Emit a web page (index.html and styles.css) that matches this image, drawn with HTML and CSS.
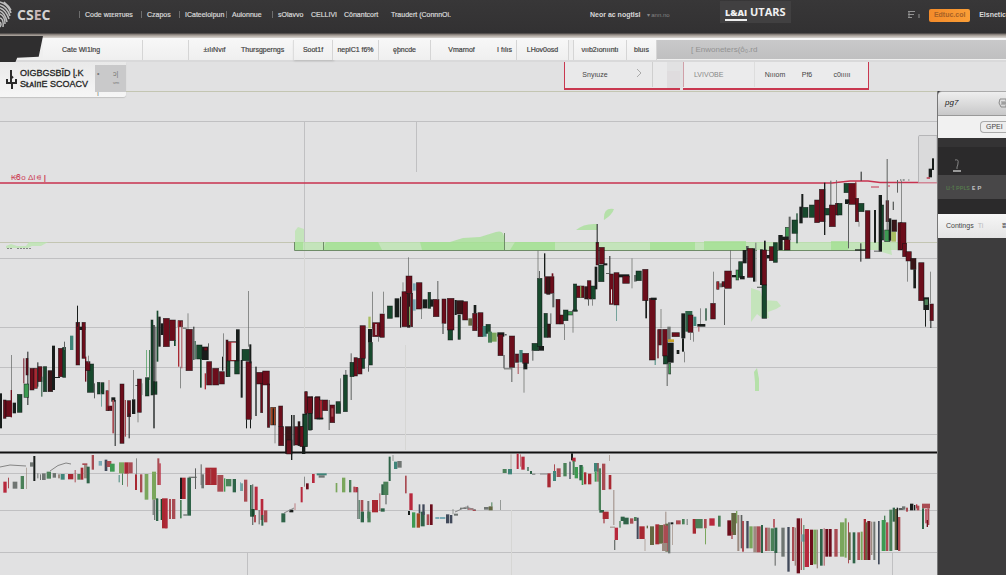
FILE: index.html
```html
<!DOCTYPE html>
<html lang="en">
<head>
<meta charset="utf-8">
<title>CSEC charts</title>
<link rel="stylesheet" href="styles.css">
</head>
<body>
<header class="top">
  <a class="brand" href="#">
    <svg class="brand-mark" viewBox="0 0 14 28" aria-hidden="true">
      <path d="M0 1Q8 3 11 12M0 4Q7 6 10 15M0 7Q6 9 9 18M0 10Q5 12 7 21M0 13Q5 15 5 23M0 17Q4 18 3 26M0 21Q2 23 0 26M4 1Q9 5 11 9"/>
    </svg>
    <span class="brand-name">CS<i>E</i>C</span>
  </a>
  <nav class="nav">
    <a class="w62" href="#">Code wɪᴇʀᴛᴜʀs</a>
    <a class="w38" href="#">Czapos</a>
    <a class="w48" href="#">ICateeloiрun</a>
    <a class="w46" href="#">Auionnue</a>
    <a class="w32" href="#">sOlavvo</a>
    <a class="w32 plain" href="#">CELLIVI</a>
    <a class="w48 plain" href="#">Cōnantcort</a>
    <a class="w100 plain" href="#">Traudert (ConnnOi.</a>
  </nav>
  <div class="account">
    <a class="strong" href="#">Neor ac nogtIsl</a>
    <small>▾ ann.no</small>
  </div>
  <a class="partner" href="#"><b>L&amp;AI</b> <span>UTARS</span></a>
  <div class="actions">
    <svg class="list" viewBox="0 0 12 10" aria-hidden="true"><path d="M0 1.500H7M0 4.500H6M0 7.500H4M1 1V8M11 4V8"/></svg>
    <button class="cta">Edtuc.col</button>
    <a class="strong" href="#">Elsnetic</a>
  </div>
</header>

<div class="toolbar">
  <div class="notch"></div>
  <div class="tabs">
    <button class="tab w100">Cate Wi1lng</button>
    <button class="tab w46" aria-label="Blank"></button>
    <button class="tab w54 bare">±ıIıNvıf</button>
    <button class="tab w54 left bare">Thursgperngs</button>
    <button class="tab w40 raised">Soot1f</button>
    <button class="tab w46">neplC1 f6%</button>
    <button class="tab w54">ęþncde</button>
    <button class="tab w62 bare">Vmarnof</button>
    <button class="tab w24">I fılıs</button>
    <button class="tab w54">LHov0osd</button>
    <button class="tab w58 gap">νııb2ıorıııntı</button>
    <button class="tab w30">bluıs</button>
  </div>
  <input class="search" type="text" aria-label="Search" placeholder="[ Enwoneters(ō̇₀.rd">
</div>

<main class="work">
  <svg class="chart" id="chart" viewBox="0 62 937 513" preserveAspectRatio="xMinYMin slice" role="img" aria-label="Price chart">
    <g class="grid">
      <path d="M0 121.500H937M0 258.500H937M0 327.500H937M0 367.500H937M0 434.500H937M0 473.500H937M0 510.500H937M0 552.500H937"/>
      <path d="M304.500 121V250M416.500 121V172M247.500 552V575M892.500 552V575"/>
    </g>
    <path class="faint" d="M304.500 250V452M405.500 345V450M511.500 510V575"/>
    <path class="olive" d="M0 242.500H937M0 91.500H937"/>
    <g class="zone">
      <path class="z1" d="M294 242H905V250H294Z"/>
      <path class="z2" d="M294 242H303V250H294ZM326 242H378L382 250H323ZM420 242H450L463 238L480 237L496 232Q505 229 504 241V250H475L444 250H422ZM515 242H555V250H510ZM650 242H695V250H650ZM704 241H746V251H704ZM831 241H848V250H831Z"/>
      <path class="z1" d="M295 242V231L298 227L304 229V242ZM751 288L760 291L763 300L777 301L781 306L776 309L768 312L769 318L762 318L757 314L751 322ZM881 242H890L892 255L882 252Z"/>
      <path class="z2" d="M576 230Q584 223 597 224V230ZM604 220Q603 207 614 209Q612 215 604 220ZM754 372L757 368L759 379V391H755V382Z"/>
      <path class="z1" d="M6 246L11 244L17 246H26L29 242H48L41 246H32L28 248H6Z"/>
      <path class="edge" d="M294.500 242V250.500H866M323.500 242V250M504.500 233V250"/>
    </g>
    <path class="alert" d="M0 183H832L850 181H868L880 182.500H937"/>
    <path class="split" d="M0 452.500H937"/>
    <path class="thumb" d="M918.500 182.500V136.500Q918.500 135.500 920 135.500H937V182.500"/>
    <g id="candles"></g>
    <g class="trace">
      <path d="M0 467L10 465L26 466M50 471Q58 464 66 463L71 464M284 513L294 508M455 512L466 507L476 510M540 474L548 474"/>
      <path stroke-dasharray="2 1" d="M7 248.500H12M17 248.500H32"/>
    </g>
    <path class="alert thin" d="M871 187H879M888 186H890"/>
  </svg>

  <div class="subbar">
    <section class="instrument">
      <svg class="pin" viewBox="0 0 12 20" aria-hidden="true"><path d="M5 0V12M1 9V13H10V9M5 6L7 8M6 13V19"/></svg>
      <h1>OIGBGSBĪD ɭ.K<br>SᴌᴀIᴨE SCOACV</h1>
      <div class="chip"><span>•</span><span>ᴐ|ᵛᵐ</span><span>ı</span></div>
    </section>
    <div class="filters">
      <div class="filter first"><button class="w60">Snyıuze</button><button class="w28" aria-label="Next"><svg class="chev" viewBox="0 0 6 10" aria-hidden="true"><path d="M1 1L5 5L1 9"/></svg></button></div>
      <div class="swatch"></div>
      <div class="filter second"><button class="w72 edge-l">LVIVOBE</button><button class="w40">Nıııom</button><button class="w24">Pf6</button><button class="w46">c0ııııı</button></div>
    </div>
  </div>

  <p class="level">₭Ꮾᴏ ΔΙ⋴ <b>|</b></p>

  <aside class="side">
    <div class="side-head"><span>pg7</span><svg class="gear" viewBox="0 0 10 10" aria-hidden="true"><path d="M2 1H8V9H3L1 5ZM4 3V7M6 3V7M4 5H8"/></svg></div>
    <div class="side-pill"><button>GPEI</button></div>
    <div class="side-dark">
      <svg class="person" viewBox="0 0 10 14" aria-hidden="true"><path d="M3 1Q7 0 6 4Q6 6 5 8V10"/><path class="base" d="M1 12H9"/></svg>
      <p>u·t ᴘᴘʟs <b>ᴇ ᴘ</b></p>
    </div>
    <div class="side-row"><span>Contings</span><i>Ti</i><b>ʬ</b></div>
  </aside>
</main>
<script src="chart.js"></script>
</body>
</html>
```
FILE: styles.css
```css
* { box-sizing: border-box; }
body {
  margin: 0;
  min-height: 100vh;
  display: flex;
  flex-direction: column;
  overflow: hidden;
  background: #e1e1e2;
  color: #444;
  font: 7px/10px "Liberation Sans", Arial, sans-serif;
}
a { color: inherit; text-decoration: none; white-space: nowrap; }
button, input { font: inherit; color: inherit; border: 0; padding: 0; margin: 0; background: none; white-space: nowrap; }
svg { fill: none; }
p, h1 { margin: 0; }

.w24 { width: 24px; }
.w28 { width: 28px; }
.w30 { width: 30px; }
.w32 { width: 33px; }
.w38 { width: 38px; }
.w40 { width: 40px; }
.w46 { width: 46px; }
.w48 { width: 47px; }
.w54 { width: 52px; }
.w58 { width: 54px; }
.w60 { width: 60px; }
.w62 { width: 62px; }
.w72 { width: 72px; }
.w100 { width: 100px; }

.top {
  flex: none;
  height: 38px;
  display: flex;
  align-items: center;
  padding-bottom: 8px;
  background: linear-gradient(#383738, #323132 33px, #77706c 34px, #b5ada6 36px, #d8d5d2 38px);
  color: #d8d8d8;
}
.brand { display: flex; align-items: center; width: 79px; gap: 3px; }
.brand-mark { width: 14px; height: 28px; stroke: #bdbdbd; stroke-width: 1.500; }
.brand-name { font: bold 14px/16px "Open Sans", sans-serif; color: #d2d2d2; }
.brand-name i { font-style: normal; color: #cbb5b7; }
.nav { display: flex; flex: none; width: 480px; }
.nav a { flex: none; padding-left: 6px; position: relative; -webkit-text-stroke: 0.200px; }
.nav a:not(.plain)::before { content: ""; position: absolute; left: 0; top: 1px; height: 7px; border-left: 1px solid #6d6d6d; }
.account { display: flex; gap: 6px; width: 161px; padding-left: 31px; white-space: nowrap; }
.account small { font-size: 6px; color: #858585; }
.strong { font-weight: bold; }
.partner { background: #414041; height: 22px; padding: 0 5px; font: bold 11px/22px "Open Sans", sans-serif; color: #f0f0f0; margin-top: -6px; }
.partner b { border-bottom: 2px solid #eee; font-size: 9px; }
.actions { display: flex; align-items: center; gap: 9px; flex: 1; justify-content: flex-end; min-width: 0; }
.list { width: 12px; height: 10px; stroke: #929292; }
.cta { width: 41px; height: 13px; border-radius: 2px; background: linear-gradient(90deg, #f38b2a, #fa9e37); color: #a66126; font-weight: bold; }

.toolbar { flex: none; display: flex; height: 24px; background: #efefef; border-top: 2px solid #f8f8f8; border-bottom: 2px solid #d9d9da; }
.notch { flex: none; width: 43px; height: 26px; margin: -4px 0 0; background: #2f2e2f; clip-path: polygon(0 0, 100% 0, 90% 80%, 40% 84%, 36% 100%, 0 100%); }
.tabs { display: flex; flex: none; }
.tab { flex: none; height: 20px; background: linear-gradient(#f7f7f7, #efefef); border-right: 1px solid #d5d5d5; text-align: center; -webkit-text-stroke: 0.200px; }
.tab:first-child { text-align: left; padding-left: 19px; }
.tab.bare { border-right-color: transparent; }
.tab.left { text-align: left; }
.raised { box-shadow: 1px 1px 2px #b8b8b8; border-left: 1px solid #ddd; }
.gap { margin-left: 4px; border-left: 1px solid #d5d5d5; }
.search { flex: 1; min-width: 0; margin: 0 0 1px; padding-left: 34px; background: linear-gradient(#c9c9ca, #bfbfc0); font-size: 8px; }
.search::placeholder { color: #929292; opacity: 1; }

.work { flex: 1; min-height: 513px; display: grid; grid-template: 29px 1fr / minmax(0, 1fr) 69px; }
.chart { grid-area: 1 / 1 / 3 / 2; width: 100%; height: 100%; }
.subbar { grid-area: 1 / 1 / 2 / 3; display: flex; align-items: flex-start; z-index: 1; }
.level { grid-area: 2 / 1; z-index: 1; padding: 82px 0 0 11px; color: #cc4055; font-size: 8px; }

.instrument { display: flex; width: 126px; height: 35px; padding: 3px 0 4px 6px; background: linear-gradient(#e9e9e9, #f6f6f6); border-radius: 0 0 3px 0; box-shadow: 0 1px 1px #c2c2c2; }
.pin { width: 12px; height: 20px; margin: 5px 2px 0 0; stroke: #2b2b2b; stroke-width: 2; }
.instrument h1 { flex: 1; font: 9px/11px "Liberation Sans", Arial, sans-serif; color: #242424; padding-top: 3px; white-space: nowrap; -webkit-text-stroke: 0.300px; }
.chip { width: 31px; height: 27px; display: grid; grid-template-columns: 16px 1fr; padding: 4px 2px; background: #c9c9ca; color: #777; }

.filters { display: flex; margin-left: 438px; height: 28px; }
.filter { display: flex; border-bottom: 2px solid #c93850; background: #e9e9ea; }
.filter button { height: 25px; text-align: center; }
.first { border-left: 1px solid #c93850; width: 103px; }
.first .w28 { border-right: 1px solid #cfcfcf; }
.swatch { width: 13px; margin: 9px 3px 0 0; background: #dfdcde; border-bottom: 2px solid #c93850; }
.second { border-right: 1px solid #c93850; width: 186px; background: #ebebec; }
.second .edge-l { text-align: left; padding-left: 10px; border-left: 1px solid #d0a0a8; color: #888; border-right: 1px solid #ddd; }
.chev { width: 6px; height: 10px; stroke: #aaa; }

.side { grid-area: 2 / 2; overflow: hidden; background: #3d3c3d; border-left: 1px solid #777; z-index: 1; }
.side-head { display: flex; align-items: center; justify-content: space-between; height: 25px; padding: 0 0 1px 7px; background: linear-gradient(#eee, #c8c8c9); border-top: 1px solid #aaa; border-bottom: 1px solid #999; border-radius: 4px 0 0 0; font: italic 8px/10px "Liberation Sans", Arial, sans-serif; color: #222; }
.gear { width: 10px; height: 10px; stroke: #8a8a8a; margin-right: -2px; }
.side-pill { display: flex; justify-content: flex-end; height: 22px; padding-top: 5px; background: #f1f1f1; }
.side-pill button { height: 12px; width: 26px; border: 1px solid #aaa; border-right: 0; border-radius: 4px 0 0 4px; text-align: left; padding-left: 5px; background: #eee; }
.side-dark { height: 76px; background: #2b2a2b; padding-top: 12px; border-top: 9px solid #343334; }
.person { display: block; width: 10px; height: 14px; margin: 0 0 2px 14px; stroke: #858585; }
.person .base { stroke: #999; stroke-width: 2; }
.side-dark p { height: 24px; padding: 8px 0 0 8px; background: #484748; color: #59814e; white-space: nowrap; }
.side-dark b { color: #bbb; }
.side-row { display: flex; gap: 4px; align-items: center; height: 24px; padding-left: 8px; background: linear-gradient(#f6f6f6, #e4e4e4); }
.side-row i { color: #bbb; font-style: normal; flex: 1; }

.grid path { stroke: #c0c0c2; }
.faint { stroke: #d6d6d4; }
.olive { stroke: #c3c5b2; }
.z1 { fill: #b9e4ae; fill-opacity: 0.750; }
.z2 { fill: #9ddf8b; fill-opacity: 0.650; }
.edge { stroke: #6f8c68; }
.alert { stroke: #c8324f; stroke-width: 1.500; }
.alert.thin { stroke-width: 1; }
.split { stroke: #111; stroke-width: 2; }
.thumb { fill: #dadadb; stroke: #b5b5b7; }
.trace path { stroke: #858585; }
.body { stroke: #101312; stroke-opacity: 0.700; stroke-width: 2; }
```
FILE: chart.js
```js
// Bars are "left top right bottom tone", in thirds of a chart unit from each run's origin.
const tones = {
  k: '#181d1b', d: '#3a1518', r: '#6c0d1b', R: '#a82832', g: '#17492d', G: '#3d9a52',
  t: '#3f8579', l: '#a9bf62', o: '#a34622', y: '#c9a32b', w: '#5d605f', p: '#e3e2e2',
  m: '#a94b52', c: '#b8283c', e: '#4a8058', f: '#7aa65c', b: '#41495a', u: '#78a9b5',
  n: '#9c8a80', v: '#646943', x: '#6f7572', q: '#2f6348'
};
const runs = [
  [0, 160, `0 700 6 805 k;10 720 18 775 r;18 722 34 770 r;34 585 36 690 w;32 690 36 772 r;38 728 48 760 k;52 703 66 757 g;70 595 73 670 r;82 575 85 735 k;72 672 86 712 G;78 595 84 645 r;90 625 102 690 r;102 625 112 685 R;112 607 115 680 k;114 620 126 665 r;124 650 127 710 g;130 620 140 695 g;144 632 158 695 d;156 557 165 690 k;165 651 180 654 k;175 565 188 650 r;188 562 197 652 g;192 545 195 570 w;210 527 220 570 t;228 487 239 615 r;231 437 234 500 k;238 500 256 510 k;246 487 256 595 r;255 590 259 665 r;262 612 281 697 g;256 605 270 632 r;265 587 267 610 w;282 670 285 715 w;292 667 300 702 g;303 668 312 702 g;304 700 306 740 t;318 692 325 752 R;324 738 336 752 r;326 660 328 740 m;334 712 346 725 k;337 720 342 820 m;344 720 347 858 k;360 672 372 850 r;374 720 378 830 m;382 722 392 770 r;386 760 389 835 k;396 718 406 762 k;400 630 402 720 w;406 675 414 678 w;412 657 424 757 r;413 757 415 787 w;425 670 427 705 w;436 653 447 708 g;438 570 440 650 G;447 570 450 660 e;453 480 459 705 g;460 665 471 703 g;460 495 464 805 k;466 500 469 665 w;470 452 475 605 g;475 470 482 560 k;482 490 490 525 k;490 475 508 560 r;509 480 526 542 r;522 540 527 558 g;534 482 548 500 r;534 482 538 620 R;544 484 547 625 m;540 620 542 685 w;563 460 565 510 w;558 508 577 632 r;548 503 560 506 w;580 500 583 600 k;584 543 587 598 g;590 555 606 597 g;600 595 605 683 g;606 560 627 600 k;612 562 622 572 r;624 550 627 600 w;620 605 635 675 r;614 640 618 688 R;638 625 656 675 r;658 635 673 672 r;666 590 670 632 k;669 520 671 590 w;678 540 684 650 r;684 545 708 603 R;694 548 708 600 p;680 603 690 650 g;704 603 718 642 g;708 508 719 603 k;722 600 728 713 k;726 568 748 602 g;738 605 754 778 r;745 393 747 560 w;748 553 754 610 k;738 778 741 805 k;750 778 753 805 k;766 620 770 768 k;770 637 790 672 r;782 670 788 758 r;788 633 808 675 r;802 672 809 802 r;812 742 827 795 o;818 745 822 795 k;836 738 848 800 r;824 795 826 850 w;836 800 851 857 r;856 800 876 880 d;860 840 876 882 r;873 765 877 900 k;880 765 884 857 k;884 800 910 855 r;894 785 900 857 d;908 762 921 858 g;906 855 916 882 k;916 695 921 765 d;922 710 938 750 r;926 755 934 810 g;934 710 938 810 k;946 710 960 775 r`],
  [300, 200, `0 680 12 740 r;10 643 22 740 g;14 575 22 640 r;22 592 37 640 r;26 640 34 690 g;44 592 58 657 r;58 600 67 657 R;50 653 70 658 k;68 600 83 632 r;86 600 89 690 w;90 615 104 668 r;94 625 100 650 m;108 605 122 640 g;120 535 122 610 w;130 525 142 635 g;136 510 139 525 w;152 460 155 600 w;150 487 162 530 g;162 473 172 528 r;173 475 186 522 r;186 475 194 505 g;180 377 196 475 r;204 387 216 427 k;206 427 217 495 g;204 455 207 515 w;217 275 219 385 w;205 350 212 385 l;218 368 240 410 r;226 372 230 405 p;240 342 253 412 r;249 275 251 340 w;234 410 236 425 w;262 318 277 355 g;284 295 298 352 k;300 290 303 383 k;306 275 322 380 r;308 247 310 275 w;318 228 336 280 r;325 172 327 228 w;322 280 330 382 d;327 320 330 375 f;332 280 338 380 r;339 250 347 272 u;339 298 347 332 u;349 248 366 327 r;364 325 366 357 w;368 298 382 325 k;384 277 392 325 g;390 298 400 320 k;400 298 417 350 r;412 243 415 300 w;426 297 438 370 r;427 370 431 402 w;442 295 462 390 r;444 390 458 420 g;464 300 470 345 k;470 302 490 342 d;474 345 481 418 g;488 305 503 360 r;505 355 516 377 v;518 340 531 392 r;521 315 529 340 k;534 338 549 410 r;548 378 560 410 t;558 373 571 400 g;564 395 576 428 e;576 398 590 425 f;592 397 613 410 k;594 403 609 467 r;610 465 614 505 w;614 403 620 406 k;612 505 634 508 w;628 408 644 502 r;634 502 637 546 w;646 462 656 487 r;653 490 656 522 m;658 450 668 487 t;668 460 686 490 r;670 488 682 508 k;671 505 673 578 w;696 430 716 452 g;697 450 700 482 w;712 235 726 440 g;713 152 715 235 w;717 213 720 235 w;716 438 732 452 k;732 160 736 230 k;734 230 762 280 r;740 233 750 283 d;755 220 760 230 r;732 340 742 412 g;742 372 752 412 d;751 340 754 372 w;757 280 763 322 w;768 298 780 372 r;780 345 790 372 r;790 330 804 362 g;792 372 794 420 w;804 335 818 345 G;818 330 832 334 g;820 252 830 330 g;818 335 820 398 w;830 258 852 293 r;840 258 844 293 f;854 260 864 297 d;862 242 873 297 r;873 258 886 297 g;864 295 867 317 w;877 295 879 317 w;884 200 892 268 k;888 127 896 195 r;890 72 893 130 k;898 142 913 192 r;896 195 912 245 g;910 190 922 196 k;928 168 931 222 k;918 219 930 222 w;928 222 940 313 r;933 268 936 310 p;942 218 957 315 r;949 315 951 363 t`],
  [560, 170, `176 313 208 322 k;188 318 208 340 r;215 265 217 355 w;222 315 230 335 x;228 303 244 332 g;248 298 264 392 r;256 390 261 445 k;268 385 286 570 r;272 383 290 390 k;284 570 287 585 t;302 417 304 475 w;292 478 296 565 r;296 478 304 525 r;308 478 322 558 r;322 470 332 510 x;310 558 324 582 g;322 518 341 578 k;324 508 342 516 y;336 488 358 500 r;320 580 323 648 w;326 580 332 612 G;350 540 358 552 k;364 430 376 505 k;366 505 372 545 k;372 545 374 577 w;376 423 397 485 q;384 435 399 487 r;390 487 392 510 w;400 440 409 468 t;400 487 402 515 w;412 462 436 470 k;415 470 418 485 m;420 415 422 462 w;436 415 440 452 g;452 400 466 447 r;459 305 461 400 w;470 335 477 358 R;477 340 488 352 x;486 335 494 350 r;494 303 514 355 r;511 240 513 303 w;493 358 495 465 k;516 315 534 322 k;528 300 536 330 G;536 275 548 322 g;540 318 554 328 k;548 240 560 280 k;558 228 566 240 w;562 235 579 322 r;579 235 585 335 k;586 218 589 335 x;591 240 604 352 p;591 350 606 354 x;600 238 608 345 k;606 240 620 345 r;606 345 620 445 g;612 212 617 240 k;620 255 634 265 k;628 230 643 272 r;640 218 652 277 g;655 195 668 240 k;666 200 690 210 k;673 208 690 240 r;676 172 688 200 G;686 140 692 210 w;696 150 712 190 g;709 130 713 220 g;718 110 728 160 k;724 72 730 112 k;728 112 744 142 g;748 105 763 142 g;764 90 778 158 r;778 58 795 155 r;792 38 796 195 k;796 115 808 135 g;811 32 814 110 w;808 105 826 170 r;829 30 831 130 w;826 100 835 135 r;832 100 846 135 g;852 40 865 68 g;866 40 888 103 r;855 88 868 102 k;864 100 867 235 w;886 35 889 100 R;886 85 896 155 r;896 100 912 125 g;902 5 905 32 k;896 155 898 170 w`],
  [800, 90, `196 362 210 505 r;181 460 184 515 k;165 478 198 482 k;222 360 228 458 k;236 315 246 485 k;222 482 240 485 w;244 345 251 450 g;254 420 270 455 G;258 332 266 395 r;260 207 263 420 w;266 385 274 452 k;274 425 288 455 l;276 390 290 424 d;278 335 282 360 w;294 398 306 480 r;303 272 305 400 w;300 398 318 478 r;308 460 320 500 r;318 485 334 513 r;332 505 348 538 d;321 513 323 575 w;340 538 348 595 k;356 518 372 632 r;370 622 387 660 k;374 628 384 645 e;375 660 378 710 k;390 642 400 692 r;391 692 394 714 k;391 545 393 640 w;386 236 396 262 k;396 205 402 240 k;380 262 390 266 c;291 270 294 308 w;300 268 304 272 x;308 268 314 272 x;325 268 328 272 x`],
  [0, 445, `10 110 20 143 c;24 98 27 130 m;38 110 52 131 x;62 93 72 132 e;90 52 100 65 x;78 68 80 132 n;100 33 106 108 k;112 85 115 100 x;120 88 123 105 x;126 85 137 105 x;140 80 153 101 e;158 84 168 98 x;174 88 180 100 n;182 87 194 104 t;204 87 220 103 R;224 75 227 112 m;232 87 242 104 e;242 68 250 104 R;247 55 262 60 m;252 60 262 100 n;260 65 269 115 q;275 30 282 74 m;296 48 306 62 u;314 44 322 78 b;320 48 334 66 m;330 56 344 80 G;357 52 372 85 f;366 85 369 120 e;373 52 386 86 R;382 86 384 125 m;386 52 398 85 m;356 90 359 112 t;405 88 411 135 R;420 88 427 142 m;408 40 410 88 w;434 87 445 164 f;456 80 468 164 f;458 164 461 210 w;462 164 466 225 x;468 160 475 228 q;472 40 478 120 m;474 122 484 160 p;478 55 482 120 c;482 162 486 225 g;486 160 503 250 R;496 164 500 250 c;507 162 513 222 m;516 162 526 222 m;540 98 546 162 k;546 98 557 162 R;540 165 545 220 e;550 208 562 212 x;562 98 573 212 q;566 95 590 99 x;585 70 588 132 w;602 58 605 120 w;604 88 612 130 x;616 68 650 120 R;630 72 634 118 m;652 90 670 140 m;672 100 676 140 G;678 102 694 124 e;698 102 708 142 q;720 112 723 138 u;724 115 728 138 t;732 104 742 170 m;750 120 755 215 q;756 118 760 240 x;764 125 773 195 c;754 192 764 215 g;762 210 768 232 m;782 162 790 225 c;776 195 779 238 w;784 210 790 242 q;792 196 802 232 m;844 205 856 232 q;868 194 880 202 k;884 175 886 195 m;902 126 908 172 c;912 95 914 125 w;918 115 926 133 r;936 87 944 114 c;950 85 980 91 t;956 91 974 98 x;1007 114 1012 142 f`],
  [330, 445, `36 98 46 142 f;57 105 64 142 e;70 125 76 142 m;76 126 84 142 c;82 128 85 222 w;86 165 89 222 q;92 165 100 200 m;92 200 102 232 q;112 168 118 220 x;112 200 122 232 e;126 165 144 202 R;148 145 151 198 m;152 190 164 200 q;154 118 164 150 q;160 110 175 150 e;166 150 170 178 x;176 35 182 108 q;188 30 190 48 x;192 50 202 72 t;202 48 215 68 x;225 92 230 145 m;238 145 248 195 c;234 198 240 210 k;246 202 256 248 G;260 205 270 248 o;266 178 271 205 b;272 200 284 244 q;277 178 284 210 b;290 208 298 240 m;300 178 308 240 r;316 216 328 222 u;330 216 346 222 u;348 208 358 235 b;360 210 367 235 b;368 192 370 208 x;372 206 384 212 x;390 188 410 192 x;412 182 415 194 w;414 190 430 194 m;428 194 438 198 m;462 186 476 194 x;476 184 488 196 v;484 172 487 184 e;510 165 512 195 x;518 72 530 84 e;534 72 546 88 t;542 28 544 72 n;560 26 566 72 c;574 35 584 74 c;570 28 572 65 m;592 66 596 78 q;600 78 606 87 q;606 86 616 89 x;652 85 662 127 R;672 58 675 85 m;669 78 678 108 t;680 70 692 96 m;700 54 710 94 e;718 50 722 102 b;723 25 729 46 k;727 38 737 50 c;728 48 734 90 e;734 66 744 100 G;748 60 758 106 q;755 65 760 120 G;762 82 769 118 R;774 86 784 118 R;792 54 806 80 t;794 80 800 110 G;802 54 806 110 m;806 70 813 195 e;816 56 826 135 m;808 195 822 203 q;818 200 836 222 R;820 222 824 235 m;838 30 840 48 n;836 90 844 133 R;850 135 853 240 n;840 245 855 248 n;854 248 864 285 c;852 285 856 315 x;868 228 872 248 e;872 215 884 228 q;880 218 896 238 q;900 220 910 236 m;912 216 920 228 e;920 218 926 282 b;928 244 944 282 R;944 282 946 318 n;950 242 954 250 v;960 244 972 300 v;976 238 988 298 R;986 240 1000 296 v;1000 238 1006 318 m;1006 200 1009 240 n;1006 236 1020 320 v`],
  [640, 445, `72 242 86 318 m;66 294 82 318 n;84 232 91 325 x;92 232 100 238 k;96 238 98 300 n;108 226 122 238 m;126 222 134 238 e;140 222 143 240 x;158 222 168 266 R;166 222 188 250 e;192 222 200 250 m;195 250 198 298 f;208 220 224 242 c;234 212 242 245 e;262 226 274 272 r;274 204 288 270 v;274 260 278 282 m;288 198 292 235 f;292 210 298 318 n;302 210 307 310 w;306 228 312 320 m;319 228 326 310 b;328 244 338 310 f;340 244 350 322 n;350 244 362 322 m;363 240 369 324 q;375 248 383 318 m;383 248 390 318 n;392 250 402 318 e;400 222 404 248 R;403 248 412 324 q;404 324 407 362 w;424 248 434 335 x;442 246 449 380 b;456 246 463 348 m;464 248 468 362 n;470 220 480 385 r;482 220 486 375 m;484 268 494 290 u;490 240 493 375 e;494 252 507 366 c;510 254 519 360 r;520 254 530 358 f;530 254 534 370 n;540 252 548 362 q;551 250 554 362 m;556 252 564 335 r;566 252 575 335 r;583 252 593 335 m;600 232 613 335 f;614 220 620 338 f;624 232 627 355 m;626 262 632 345 v;638 262 646 355 q;652 262 660 345 m;662 260 668 345 f;671 222 678 345 R;676 232 682 345 v;682 228 691 345 r;693 230 697 330 n;700 230 706 345 x;714 228 719 358 b;725 225 737 318 G;732 212 736 230 e;738 232 745 318 m;748 194 757 318 e;758 188 765 230 q;764 192 772 315 v;770 188 774 315 k;774 216 781 318 m;776 190 790 194 k;786 184 796 194 x;798 188 804 200 m;810 176 820 196 k;822 180 826 196 k;828 178 832 190 c;830 182 838 196 m;846 176 870 190 m;846 190 852 252 q;856 192 860 235 c;862 190 868 240 m;860 225 864 246 r`]
];
const outlined = 4;
const host = document.getElementById('candles');
runs.forEach(([ox, oy, bars], index) => {
  const group = document.createElementNS('http://www.w3.org/2000/svg', 'g');
  group.setAttribute('transform', `translate(${ox} ${oy}) scale(${1 / 3})`);
  for (const bar of bars.split(';')) {
    const [left, top, right, bottom, tone] = bar.split(' ');
    const rect = document.createElementNS('http://www.w3.org/2000/svg', 'rect');
    rect.setAttribute('x', left);
    rect.setAttribute('y', top);
    rect.setAttribute('width', right - left);
    rect.setAttribute('height', bottom - top);
    rect.setAttribute('fill', tones[tone]);
    if (index < outlined && right - left > 5 && 'rgRGdo'.includes(tone)) rect.setAttribute('class', 'body');
    group.append(rect);
  }
  host.append(group);
});
```
